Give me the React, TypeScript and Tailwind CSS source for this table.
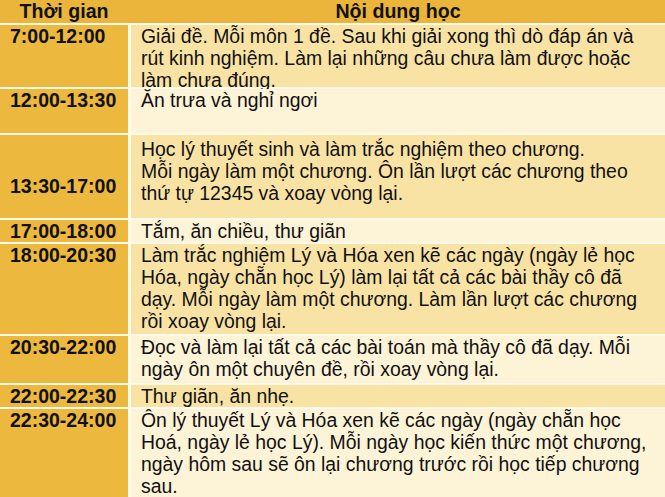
const ROWS: { time: string; lines: string[]; h: number; dark: boolean; timePad?: string; bodyPad?: string }[] = [
  {
    time: "7:00-12:00",
    lines: [
      "Giải đề. Mỗi môn 1 đề. Sau khi giải xong thì dò đáp án và",
      "rút kinh nghiệm. Làm lại những câu chưa làm được hoặc",
      "làm chưa đúng.",
    ],
    h: 62,
    dark: true,
  },
  { time: "12:00-13:30", lines: ["Ăn trưa và nghỉ ngơi"], h: 44, dark: false },
  {
    time: "13:30-17:00",
    lines: [
      "Học lý thuyết sinh và làm trắc nghiệm theo chương.",
      "Mỗi ngày làm một chương. Ôn lần lượt các chương theo",
      "thứ tự 12345 và xoay vòng lại.",
    ],
    h: 83,
    dark: true,
    timePad: "pt-[40px]",
    bodyPad: "pt-[3px]",
  },
  { time: "17:00-18:00", lines: ["Tắm, ăn chiều, thư giãn"], h: 22, dark: false },
  {
    time: "18:00-20:30",
    lines: [
      "Làm trắc nghiệm Lý và Hóa xen kẽ các ngày (ngày lẻ học",
      "Hóa, ngày chẵn học Lý) làm lại tất cả các bài thầy cô đã",
      "dạy. Mỗi ngày làm một chương. Làm lần lượt các chương",
      "rồi xoay vòng lại.",
    ],
    h: 90,
    dark: true,
  },
  {
    time: "20:30-22:00",
    lines: [
      "Đọc và làm lại tất cả các bài toán mà thầy cô đã dạy. Mỗi",
      "ngày ôn một chuyên đề, rồi xoay vòng lại.",
    ],
    h: 47,
    dark: false,
  },
  { time: "22:00-22:30", lines: ["Thư giãn, ăn nhẹ."], h: 22, dark: true },
  {
    time: "22:30-24:00",
    lines: [
      "Ôn lý thuyết Lý và Hóa xen kẽ các ngày (ngày chẵn học",
      "Hoá, ngày lẻ học Lý). Mỗi ngày học kiến thức một chương,",
      "ngày hôm sau sẽ ôn lại chương trước rồi học tiếp chương",
      "sau.",
    ],
    h: 88,
    dark: false,
  },
];

export default function App() {
  return (
    <div
      className="w-[665px] h-[497px] overflow-hidden bg-[#fffaea] flex flex-col gap-[2px] text-[#111111]"
      style={{ fontFamily: '"Liberation Sans", Arial, sans-serif' }}
    >
      <div className="flex h-[23px] shrink-0 gap-[3px] bg-[#eab53a] font-bold text-[19.6px] leading-[23px]">
        <div className="w-[128px] text-center">Thời gian</div>
        <div className="flex-1 text-center">Nội dung học</div>
      </div>
      {ROWS.map((r) => (
        <div key={r.time} className="flex shrink-0 gap-[3px]" style={{ height: r.h }}>
          <div className={`w-[128px] shrink-0 bg-[#ecb83e] pl-[10px] font-bold text-[19.5px] leading-[22px] ${r.timePad ?? ""}`}>
            {r.time}
          </div>
          <div
            className={`flex-1 pl-[10px] text-[19.4px] leading-[22px] whitespace-nowrap ${r.bodyPad ?? ""} ${
              r.dark ? "bg-[#f9e3a4]" : "bg-[#fdf3d7]"
            }`}
          >
            {r.lines.map((l) => (
              <div key={l}>{l}</div>
            ))}
          </div>
        </div>
      ))}
    </div>
  );
}
